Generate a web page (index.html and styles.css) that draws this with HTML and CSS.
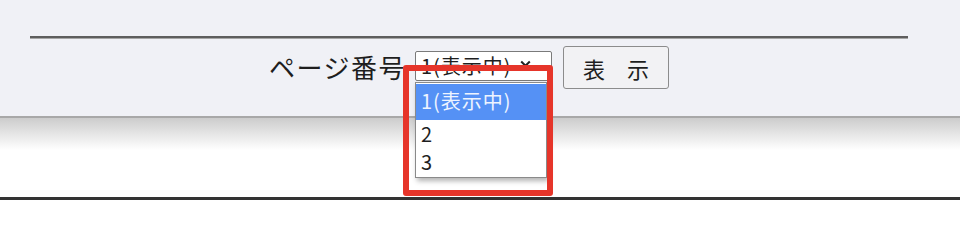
FILE: index.html
```html
<!DOCTYPE html>
<html lang="ja">
<head>
<meta charset="utf-8">
<title>ページ番号</title>
<link rel="stylesheet" href="styles.css">
</head>
<body>
<div class="page">
  <div class="panel">
    <hr class="rule">
    <div class="pager">
      <span class="label">ページ番号</span>
      <div class="select-wrap">
        <div class="select">
          <span class="select-text">1(表示中)</span>
          <svg class="chevron" width="11" height="8" viewBox="0 0 11 8"><path d="M1.2 1.5 L5.5 5.8 L9.8 1.5" fill="none" stroke="#222" stroke-width="2"/></svg>
        </div>
        <ul class="dropdown">
          <li class="opt opt-active">1(表示中)</li>
          <li class="opt">2</li>
          <li class="opt">3</li>
        </ul>
      </div>
      <button class="btn">表　示</button>
    </div>
  </div>
  <div class="shadow"></div>
  <div class="spacer"></div>
  <div class="bottom-line"></div>
  <div class="highlight"></div>
</div>
</body>
</html>
```
FILE: styles.css
```css
html, body {
  margin: 0;
  padding: 0;
  background: #fff;
}
.page {
  position: relative;
  width: 960px;
  height: 200px;
  overflow: hidden;
  font-family: "Noto Sans CJK JP", "Noto Sans", sans-serif;
  color: #1e1e1e;
}
.panel {
  background: #f0f1f6;
  border-bottom: 2px solid #a8a8a8;
  padding: 36px 52px 0 30px;
  height: 80px;
}
.rule {
  margin: 0;
  height: 0;
  border: 0;
  border-top: 2px solid #5e5e5e;
  border-bottom: 1px solid #a6a6a6;
}
.pager {
  margin-top: 7px;
  display: flex;
  align-items: center;
  justify-content: center;
}
.label {
  font-size: 26px;
  letter-spacing: 1.5px;
  line-height: 30px;
  color: #1e1e1e;
  margin-right: 9px;
  margin-top: -2px;
}
.select-wrap {
  position: relative;
  width: 137px;
  height: 30px;
  margin-top: -3px;
}
.select {
  box-sizing: border-box;
  width: 137px;
  height: 30px;
  border: 1px solid #7a7a7a;
  border-radius: 2px;
  background: #fff;
  display: flex;
  align-items: center;
  padding-left: 5px;
}
.select-text {
  font-size: 20px;
  letter-spacing: 1px;
  line-height: 28px;
  color: #1e1e1e;
}
.chevron {
  margin-left: 8px;
  margin-top: -4px;
}
.dropdown {
  position: absolute;
  left: 0;
  top: 31px;
  width: 132px;
  height: 96px;
  box-sizing: border-box;
  margin: 0;
  padding: 1px 0 0 0;
  list-style: none;
  background: #fff;
  border: 1px solid #8a8a8a;
  box-shadow: 2px 3px 5px rgba(0, 0, 0, 0.3);
}
.opt {
  font-size: 20px;
  letter-spacing: 1px;
  line-height: 28px;
  height: 28px;
  padding-left: 5px;
  color: #1e1e1e;
}
.opt-active {
  background: #5591f5;
  color: #eef4ff;
  height: 36px;
  line-height: 34px;
}
.btn {
  margin-left: 11px;
  width: 106px;
  height: 43px;
  box-sizing: border-box;
  border: 1px solid #8c8c8c;
  border-radius: 3px;
  background: #f2f2f4;
  font-family: "Noto Sans CJK JP", sans-serif;
  font-size: 22px;
  line-height: 30px;
  color: #1e1e1e;
  padding: 0;
}
.shadow {
  height: 32px;
  background: linear-gradient(#cccccc, #ffffff);
}
.spacer {
  height: 47px;
}
.bottom-line {
  height: 3px;
  background: #333;
}
.highlight {
  position: absolute;
  left: 403px;
  top: 65px;
  width: 150px;
  height: 131px;
  box-sizing: border-box;
  border: 6px solid #e6352a;
  border-radius: 3px;
}
```
